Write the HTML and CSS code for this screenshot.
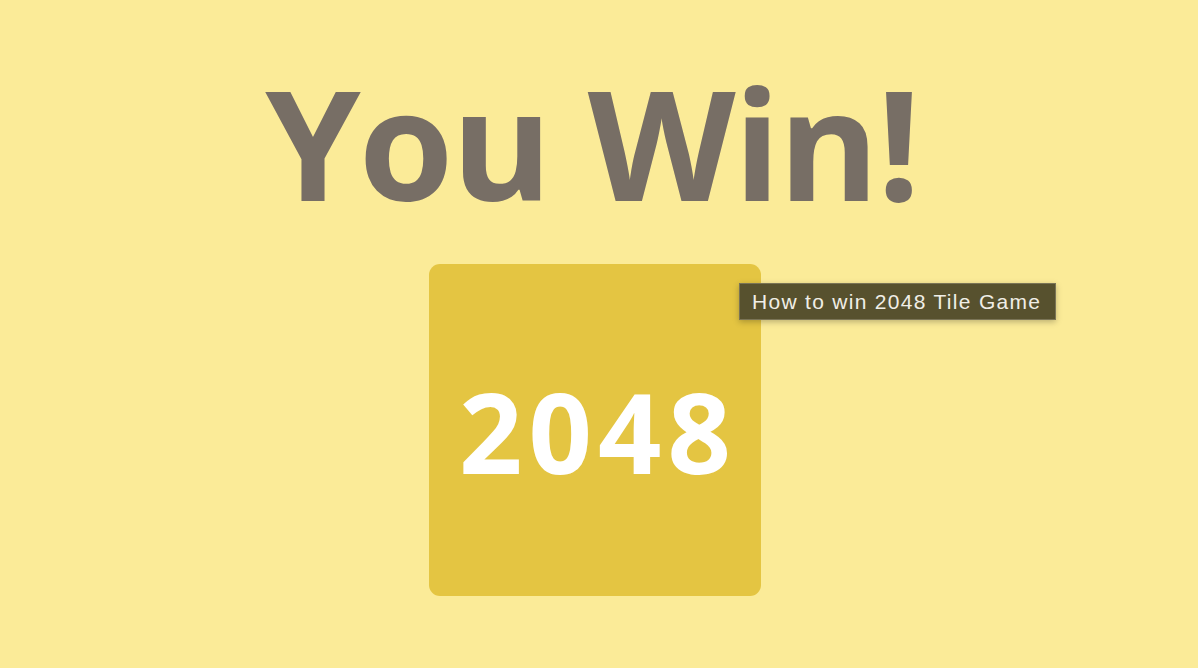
FILE: index.html
```html
<!DOCTYPE html>
<html>
<head>
<meta charset="utf-8">
<link rel="stylesheet" href="styles.css">
</head>
<body>
<main class="screen">
  <h1 class="title">You Win!</h1>
  <div class="tile-wrap">
    <div class="tile"><span class="tile-num">2048</span></div>
    <div class="tooltip">How to win 2048 Tile Game</div>
  </div>
</main>
</body>
</html>
```
FILE: styles.css
```css
html, body {
  margin: 0;
  padding: 0;
  background: #fbeb98;
  width: 1198px;
  height: 668px;
  overflow: hidden;
}
.screen {
  display: flex;
  flex-direction: column;
  align-items: center;
}
.title {
  margin: 47px 0 0 -14px;
  font-family: "Open Sans", sans-serif;
  font-weight: 700;
  font-size: 153px;
  line-height: 190px;
  color: #776e65;
  letter-spacing: -2px;
}
.tile-wrap {
  position: relative;
  margin-top: 27px;
  margin-left: -8px;
}
.tile {
  width: 332px;
  height: 332px;
  border-radius: 11px;
  background: #e4c542;
  display: flex;
  align-items: center;
  justify-content: center;
}
.tile-num {
  color: #ffffff;
  font-family: "Open Sans", sans-serif;
  font-weight: 700;
  font-size: 111px;
  line-height: 1;
  letter-spacing: 6px;
  margin-right: -6px;
  margin-top: 2px;
}
.tooltip {
  position: absolute;
  left: 310px;
  top: 19px;
  padding: 6px 14px 5px 12px;
  background: #57512e;
  border: 1px solid #7a7456;
  color: #f0eee6;
  font-family: "Liberation Sans", Arial, sans-serif;
  font-size: 21px;
  line-height: 24px;
  letter-spacing: 1.3px;
  white-space: nowrap;
  box-shadow: 0 2px 6px rgba(0,0,0,0.25);
}
```
